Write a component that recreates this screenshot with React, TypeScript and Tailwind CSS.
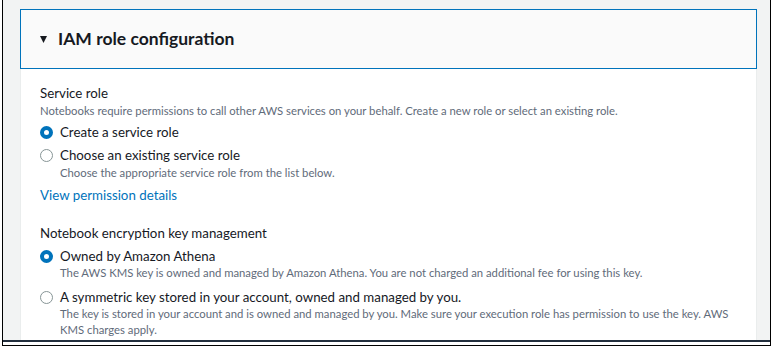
import React from 'react';

const Radio: React.FC<{ checked?: boolean }> = ({ checked }) =>
  checked ? (
    <span className="w-[13px] h-[13px] rounded-full border-[4px] border-[#0073bb] bg-white shrink-0" />
  ) : (
    <span className="w-[13px] h-[13px] rounded-full border border-[#879596] bg-white shrink-0" />
  );

const App: React.FC = () => {
  return (
    <div className="w-[773px] h-[351px] bg-white pl-[2px] font-['Lato',sans-serif] text-[#16191f]">
      <div className="w-[769px] h-[346px] border-x border-b border-black flex flex-col">
        <div className="flex-1 overflow-hidden bg-[#f2f3f3] pt-[9px] pl-[17px]">
          <div className="w-[737px]">
            {/* Header */}
            <div className="h-[60px] border border-[#0073bb] bg-[#fafafa] flex items-center pl-[19px] gap-[11px]">
              <svg width="7" height="7" viewBox="0 0 7 7">
                <polygon points="0,0 7,0 3.5,7" fill="#16191f" />
              </svg>
              <span className="text-[17.5px] font-bold leading-none">IAM role configuration</span>
            </div>

            {/* Body */}
            <div className="bg-white border-x border-[#eaeded] px-[19px] pt-[14px] pb-6">
              <div className="text-[13.3px] leading-[20px]">Service role</div>
              <div className="text-[11.3px] leading-[16px] text-[#5f6b7a]">
                Notebooks require permissions to call other AWS services on your behalf. Create a new role or select an existing role.
              </div>

              <div className="mt-[3px] flex items-center gap-[7px] h-[20px]">
                <Radio checked />
                <span className="text-[13.3px] leading-[20px]">Create a service role</span>
              </div>
              <div className="mt-[4px] flex items-center gap-[7px] h-[19px]">
                <Radio />
                <span className="text-[13.3px] leading-[19px]">Choose an existing service role</span>
              </div>
              <div className="pl-[20px] text-[11.3px] leading-[16px] text-[#5f6b7a]">
                Choose the appropriate service role from the list below.
              </div>
              <div className="mt-[4px] text-[13.3px] leading-[20px] text-[#0073bb]">View permission details</div>

              <div className="mt-[18px] text-[13.3px] leading-[20px]">Notebook encryption key management</div>
              <div className="mt-[4px] flex items-center gap-[7px] h-[18px]">
                <Radio checked />
                <span className="text-[13.3px] leading-[18px]">Owned by Amazon Athena</span>
              </div>
              <div className="pl-[20px] text-[11.3px] leading-[16px] text-[#5f6b7a]">
                The AWS KMS key is owned and managed by Amazon Athena. You are not charged an additional fee for using this key.
              </div>
              <div className="mt-[7px] flex items-center gap-[7px] h-[18px]">
                <Radio />
                <span className="text-[13.3px] leading-[18px]">A symmetric key stored in your account, owned and managed by you.</span>
              </div>
              <div className="pl-[20px] text-[11.3px] leading-[16px] text-[#5f6b7a]">
                The key is stored in your account and is owned and managed by you. Make sure your execution role has permission to use the key. AWS KMS charges apply.
              </div>
            </div>
          </div>
        </div>
        <div className="h-[2px] bg-[#232f3e]" />
        <div className="h-[3px] bg-white" />
      </div>
    </div>
  );
};

export default App;
